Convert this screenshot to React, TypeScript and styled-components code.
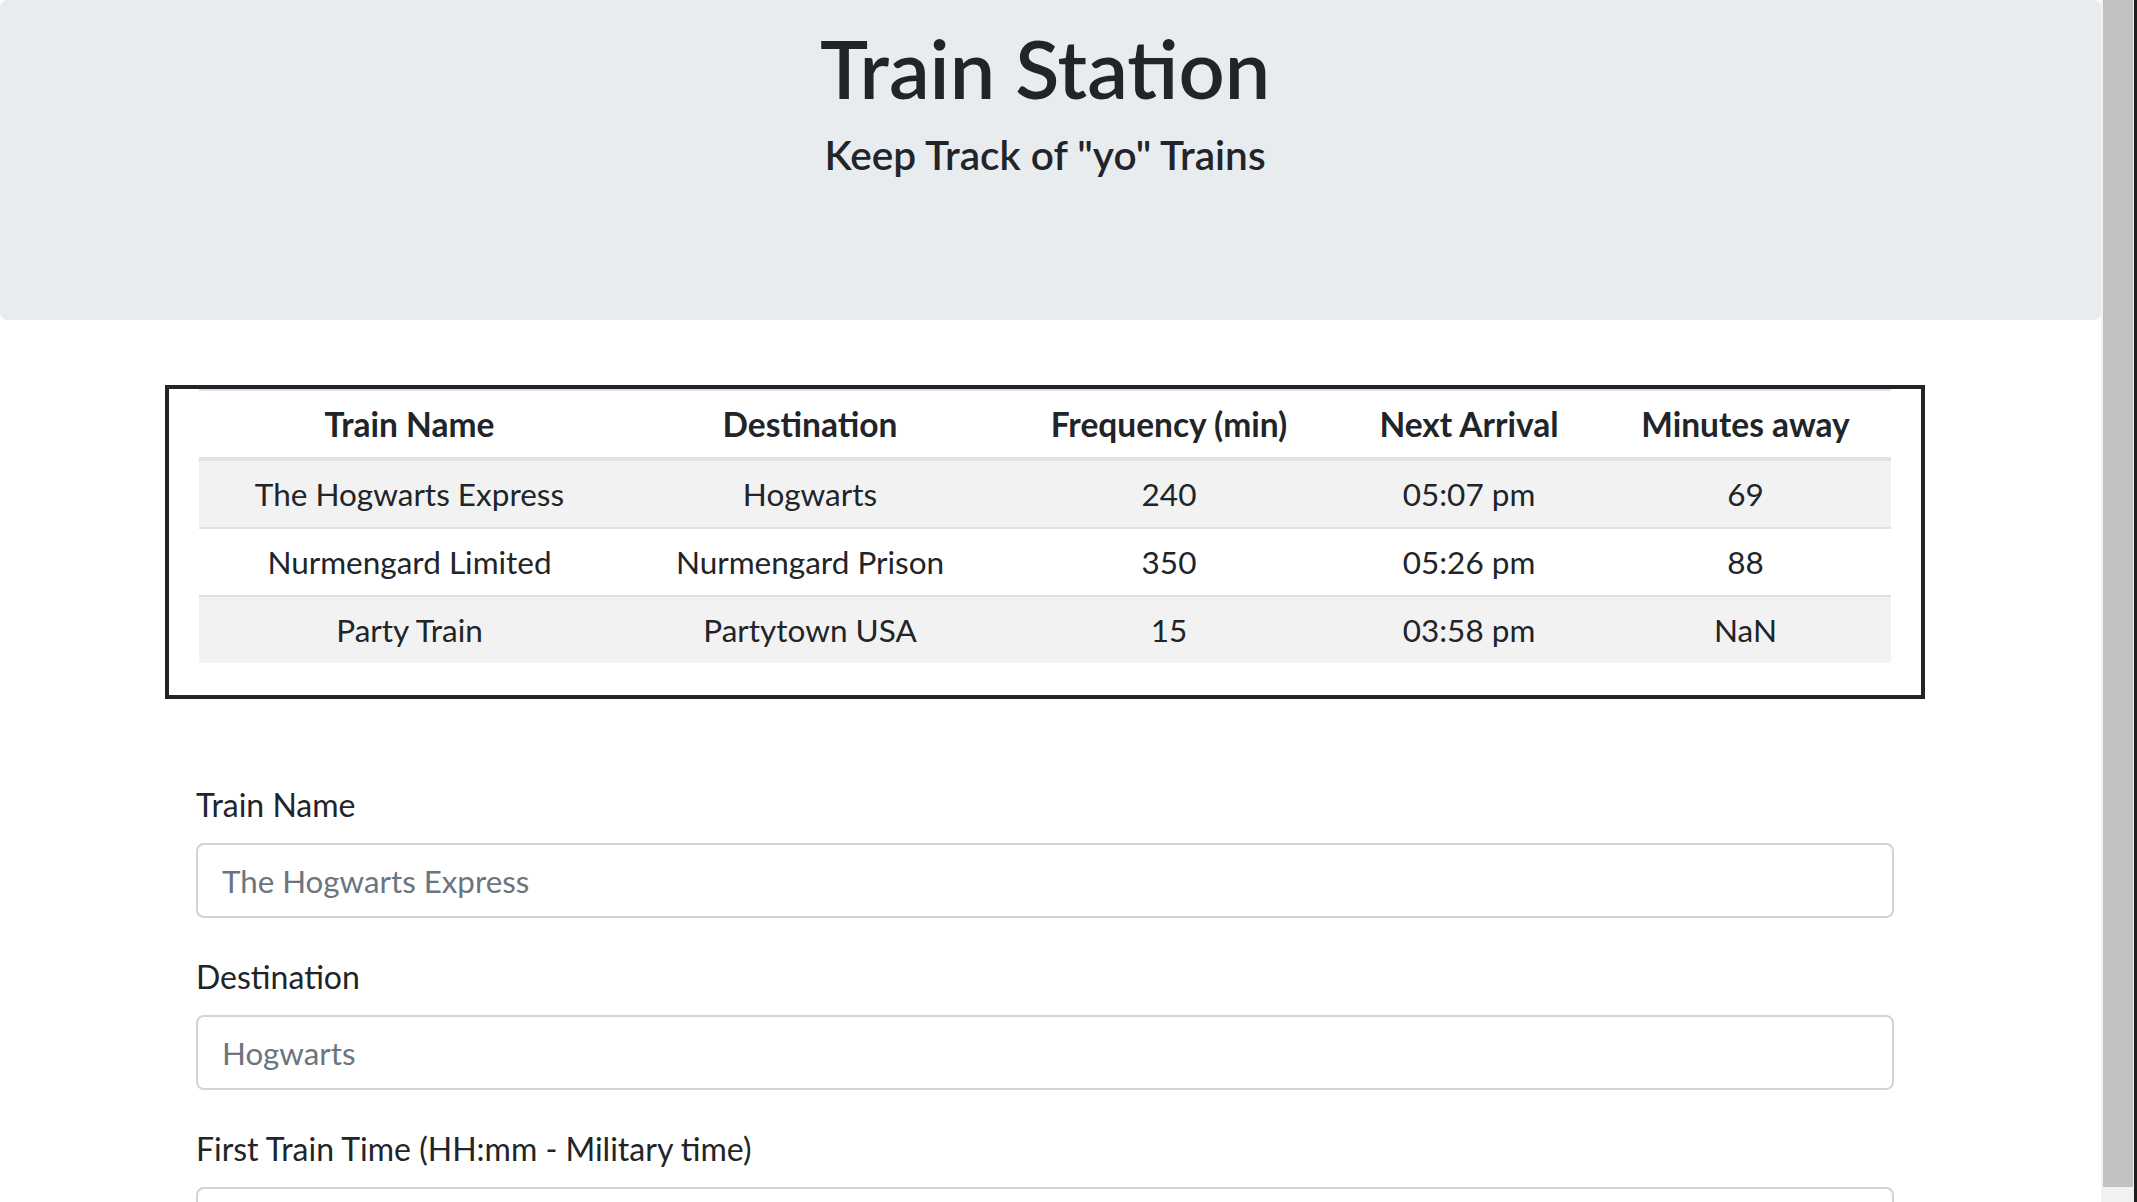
import React from "react";
import styled, { createGlobalStyle } from "styled-components";

interface Train {
  name: string;
  destination: string;
  frequency: string;
  next: string;
  away: string;
}

const trains: Train[] = [
  { name: "The Hogwarts Express", destination: "Hogwarts", frequency: "240", next: "05:07 pm", away: "69" },
  { name: "Nurmengard Limited", destination: "Nurmengard Prison", frequency: "350", next: "05:26 pm", away: "88" },
  { name: "Party Train", destination: "Partytown USA", frequency: "15", next: "03:58 pm", away: "NaN" },
];

const columns = [
  { title: "Train Name", width: 421 },
  { title: "Destination", width: 380 },
  { title: "Frequency (min)", width: 338 },
  { title: "Next Arrival", width: 262 },
  { title: "Minutes away", width: 291 },
];

const fields = [
  { label: "Train Name", placeholder: "The Hogwarts Express" },
  { label: "Destination", placeholder: "Hogwarts" },
  { label: "First Train Time (HH:mm - Military time)", placeholder: "05:35" },
  { label: "Frequency (min)", placeholder: "240" },
];

const GlobalStyle = createGlobalStyle`
  * { box-sizing: border-box; }
  body {
    margin: 0;
    background: #fff;
    color: #212529;
    font-family: Lato, "Noto Sans", sans-serif;
  }
`;

const Page = styled.div`
  display: flex;
  height: 100vh;
  overflow: hidden;
`;

const Main = styled.main`
  flex: 1;
  min-width: 0;
  overflow: hidden;
`;

/* the browser's scroll bar, as it shows in the shot */
const ScrollTrack = styled.div`
  width: 36px;
  flex: none;
  padding: 0 1px 0 2px;
  background: #f1f1f1;
  border-right: 3px solid #1e1e1e;
`;

const ScrollThumb = styled.div`
  height: 1187px;
  background: #c1c1c1;
`;

const Jumbotron = styled.header`
  height: 320px;
  padding-top: 19px;
  margin-bottom: 65px;
  background: #e9ecef;
  border-radius: 7px;
`;

const Container = styled.div`
  margin: 0 176px 0 165px;
`;

const Heading = styled(Container)`
  text-align: center;
`;

const Title = styled.h1`
  margin: 0;
  font-size: 81px;
  font-weight: 600;
  line-height: 1.2;
`;

const Lead = styled.h3`
  margin: 15px 0 0;
  font-size: 40.6px;
  font-weight: 600;
  line-height: 1.2;
`;

const ScheduleCard = styled.section`
  border: 4px solid #212529;
  padding: 0 30px 32px;
`;

const ScheduleTable = styled.table`
  width: 100%;
  table-layout: fixed;
  border-collapse: collapse;
`;

const HeadCell = styled.th`
  padding: 9px 12px;
  font-size: 33.5px;
  font-weight: 700;
  line-height: 48px;
  text-align: center;
  white-space: nowrap;
  border-top: 2px solid #dee2e6;
  border-bottom: 4px solid #dee2e6;
`;

const Row = styled.tr<{ $striped: boolean }>`
  background: ${(p) => (p.$striped ? "#f2f2f2" : "#fff")};
`;

const Cell = styled.td`
  padding: 9px 12px;
  font-size: 31.5px;
  line-height: 48px;
  text-align: center;
  white-space: nowrap;
  border-top: 2px solid #dee2e6;
`;

const Form = styled.form`
  margin-top: 84px;
  padding: 0 31px;
`;

const FormGroup = styled.div`
  margin-bottom: 37px;
`;

const Label = styled.label`
  display: block;
  margin-bottom: 16px;
  font-size: 32px;
  line-height: 44px;
  white-space: nowrap;
`;

const Input = styled.input`
  display: block;
  width: 100%;
  height: 75px;
  padding: 0 24px;
  border: 2px solid #ced4da;
  border-radius: 8px;
  background: #fff;
  color: #495057;
  font-family: inherit;
  font-size: 31.3px;
  outline: none;

  &::placeholder {
    color: #6c757d;
  }
`;

export default function App() {
  return (
    <Page>
      <GlobalStyle />
      <Main>
        <Jumbotron>
          <Heading>
            <Title>Train Station</Title>
            <Lead>Keep Track of "yo" Trains</Lead>
          </Heading>
        </Jumbotron>

        <Container>
          <ScheduleCard>
            <ScheduleTable>
              <colgroup>
                {columns.map((c) => (
                  <col key={c.title} style={{ width: c.width }} />
                ))}
              </colgroup>
              <thead>
                <tr>
                  {columns.map((c) => (
                    <HeadCell key={c.title}>{c.title}</HeadCell>
                  ))}
                </tr>
              </thead>
              <tbody>
                {trains.map((t, i) => (
                  <Row key={t.name} $striped={i % 2 === 0}>
                    <Cell>{t.name}</Cell>
                    <Cell>{t.destination}</Cell>
                    <Cell>{t.frequency}</Cell>
                    <Cell>{t.next}</Cell>
                    <Cell>{t.away}</Cell>
                  </Row>
                ))}
              </tbody>
            </ScheduleTable>
          </ScheduleCard>

          <Form onSubmit={(e) => e.preventDefault()}>
            {fields.map((f) => (
              <FormGroup key={f.label}>
                <Label>{f.label}</Label>
                <Input type="text" placeholder={f.placeholder} />
              </FormGroup>
            ))}
          </Form>
        </Container>
      </Main>
      <ScrollTrack>
        <ScrollThumb />
      </ScrollTrack>
    </Page>
  );
}
